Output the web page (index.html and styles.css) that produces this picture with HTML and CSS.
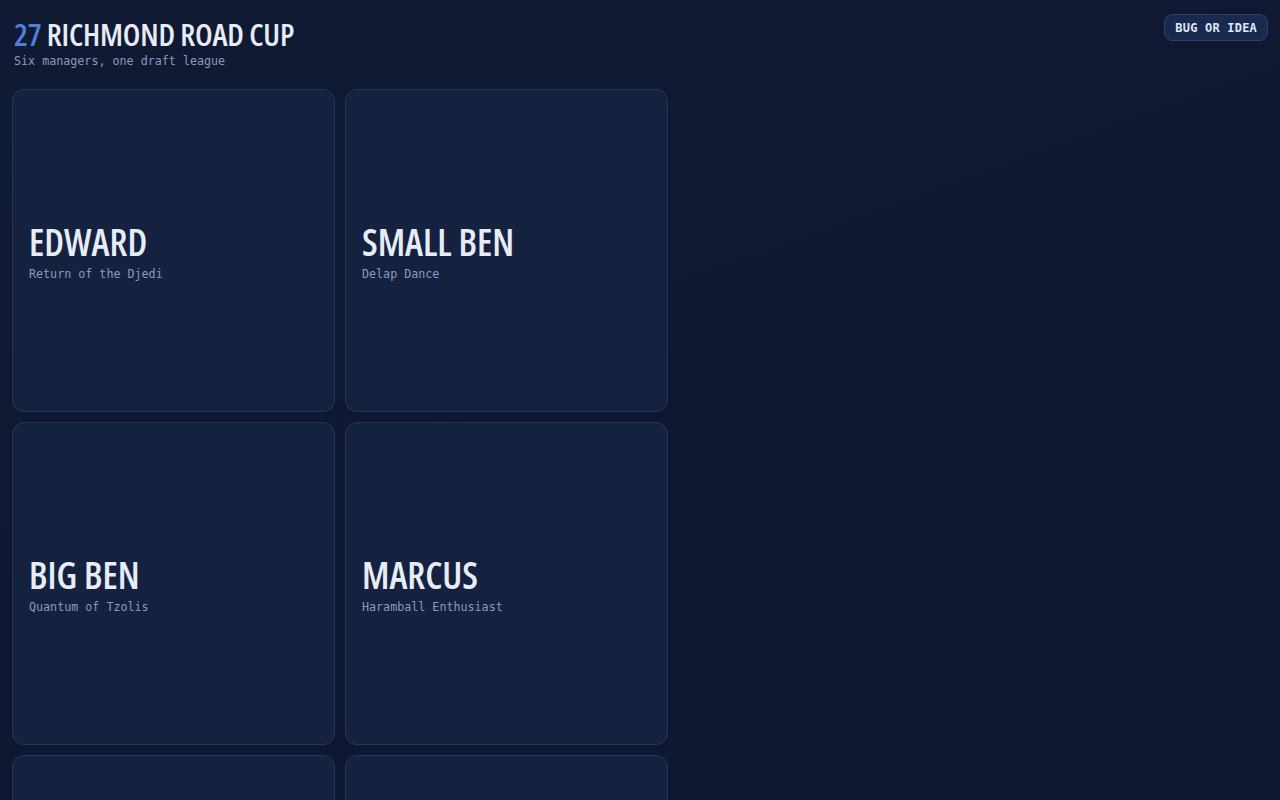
FILE: index.html
```html
<!DOCTYPE html>
<html lang="en">
<head>
<meta charset="utf-8">
<title>Richmond Road Cup</title>
<link rel="stylesheet" href="styles.css">
</head>
<body>
<header class="top">
  <div class="brand">
    <h1 class="title"><span class="num">27</span> RICHMOND ROAD CUP</h1>
    <p class="tagline">Six managers, one draft league</p>
  </div>
  <button class="bug">BUG OR IDEA</button>
</header>
<main class="grid">
  <div class="card"><div class="name">EDWARD</div><div class="team">Return of the Djedi</div></div>
  <div class="card"><div class="name">SMALL BEN</div><div class="team">Delap Dance</div></div>
  <div class="card"><div class="name">BIG BEN</div><div class="team">Quantum of Tzolis</div></div>
  <div class="card"><div class="name">MARCUS</div><div class="team">Haramball Enthusiast</div></div>
  <div class="card"><div class="name">&nbsp;</div><div class="team">&nbsp;</div></div>
  <div class="card"><div class="name">&nbsp;</div><div class="team">&nbsp;</div></div>
</main>
</body>
</html>
```
FILE: styles.css
```css
html, body {
  margin: 0;
  padding: 0;
}
body {
  background: linear-gradient(160deg, #111a33 0%, #0f1830 40%, #0f1830 100%);
  background-color: #0f1830;
  min-height: 800px;
  color: #e6ecf8;
  font-family: "DejaVu Sans Mono", "Liberation Mono", monospace;
}
.top {
  display: flex;
  justify-content: space-between;
  align-items: flex-start;
  padding: 14px 12px 0 14px;
}
.title {
  margin: 0;
  font-family: "Open Sans", sans-serif;
  font-stretch: 75%;
  font-weight: 600;
  font-size: 31px;
  line-height: 40px;
  letter-spacing: -0.2px;
  color: #e6ecf8;
}
.num {
  color: #4f7fd8;
}
.tagline {
  margin: 0;
  font-size: 11.7px;
  line-height: 14px;
  color: #8a9abd;
}
.bug {
  height: 27px;
  padding: 0 10px;
  border-radius: 8px;
  background: #1a2a4e;
  border: 1px solid #2c3f68;
  color: #dfe7f7;
  font-family: "DejaVu Sans Mono", "Liberation Mono", monospace;
  font-weight: 700;
  font-size: 12px;
  letter-spacing: 0.2px;
}
.grid {
  display: grid;
  grid-template-columns: repeat(2, 323px);
  grid-auto-rows: 323px;
  gap: 10px;
  padding: 21px 12px 12px 12px;
}
.card {
  box-sizing: border-box;
  background: #15223f;
  border: 1px solid #25355a;
  border-radius: 12px;
  display: flex;
  flex-direction: column;
  justify-content: center;
  padding: 4px 16px 0 16px;
}
.name {
  font-family: "Open Sans", sans-serif;
  font-stretch: 75%;
  font-weight: 600;
  font-size: 37px;
  line-height: 37px;
  color: #e6ecf8;
}
.team {
  margin-top: 6px;
  font-size: 11.7px;
  line-height: 16px;
  color: #8a9abd;
}
```
